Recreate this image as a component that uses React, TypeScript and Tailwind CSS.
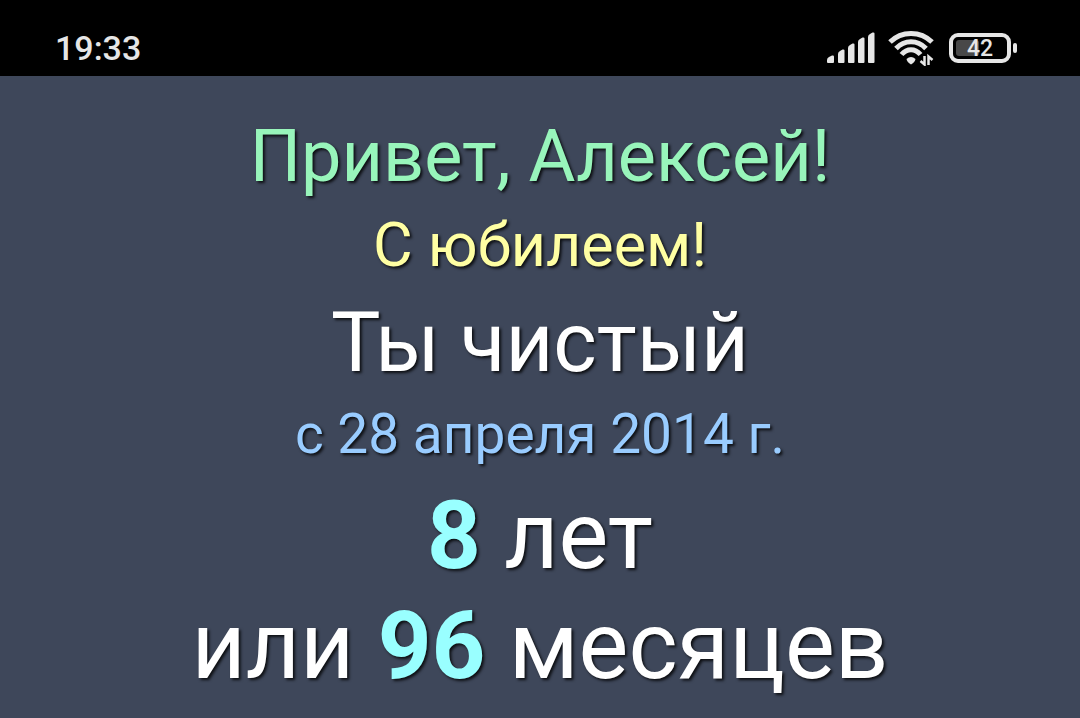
function SignalIcon() {
  return (
    <svg className="h-8 w-12" viewBox="0 0 48 32" fill="#e6e6e6" aria-label="Сигнал">
      <path d="M0 30v-2q0-2 2-3l3-1.500q2-.5 2 1v5.500q0 1-1 1H1q-1 0-1-1z" />
      <path d="M11 30v-8q0-2 2-3l2.500-1.500q2-.5 2 1V30q0 1-1 1H12q-1 0-1-1z" />
      <path d="M21 30V16q0-2 2-3l2.500-1.500q2-.5 2 1V30q0 1-1 1H22q-1 0-1-1z" />
      <path d="M31 30V10q0-2 2-3l2.500-1.500q2-.5 2 1V30q0 1-1 1H32q-1 0-1-1z" />
      <path d="M41 30V5q0-2 2-3l2.500-1.500q2-.5 2 1V30q0 1-1 1H42q-1 0-1-1z" />
    </svg>
  );
}

function WifiIcon() {
  return (
    <svg className="h-9 w-12" viewBox="0 0 48 36" fill="none" stroke="#e6e6e6" strokeWidth="5" aria-label="Wi-Fi">
      <path d="M3 12C14.500 .5 33.500 .5 45 12" />
      <path d="M9 18.500C17.500 9.500 30.500 9.500 39 18.500" />
      <path d="M14.500 24.500C20 18 28 18 33.500 24.500" />
      <path d="M19.500 29Q24 25 28.500 29Q28 32 24 34.500Q20 32 19.500 29z" fill="#e6e6e6" stroke="none" />
      <path d="M37.500 26v8.500L33.500 31M41.500 35v-8.500l4 3.500" strokeWidth="2.500" />
    </svg>
  );
}

function Battery({ level }: { level: number }) {
  return (
    <div className="flex items-center gap-0.5">
      <div className="relative flex h-[30px] w-[62px] items-center justify-center rounded-[9px] border-4 border-[#e6e6e6] p-[3px]">
        <div
          className="absolute inset-y-[3px] left-[3px] rounded-[3px] bg-[#484848]"
          style={{ width: `${level}%` }}
        />
        <span className="relative text-[23px] leading-none font-medium">{level}</span>
      </div>
      <div className="h-2.5 w-1 rounded-full bg-[#e6e6e6]" />
    </div>
  );
}

export default function App() {
  return (
    <div className="flex min-h-screen flex-col bg-[#3e475a] font-['Roboto',sans-serif]">
      <header className="flex h-[76px] items-center justify-between bg-black pt-5 pr-[63px] pl-[55px] text-[#e6e6e6]">
        <time className="text-[34px] font-medium">19:33</time>
        <div className="flex items-center gap-3.5">
          <div className="flex items-center gap-3">
            <SignalIcon />
            <WifiIcon />
          </div>
          <Battery level={42} />
        </div>
      </header>
      <main className="flex flex-1 flex-col items-center pt-[39px] text-center text-white [text-shadow:2px_2px_3px_#000000cc]">
        <h1 className="text-[72px] leading-[84px] text-[#98f5bb]">Привет, Алексей!</h1>
        <p className="text-[61px] leading-[92px] text-[#ffffa3]">С юбилеем!</p>
        <p className="text-[83px] leading-[104px]">Ты чистый</p>
        <p className="text-[55px] leading-[78px] text-[#99ccff]">с 28 апреля 2014 г.</p>
        <div className="pt-2 text-[94px] leading-[110px]">
          <p>
            <strong className="text-[#99ffff]">8</strong> лет
          </p>
          <p>
            или <strong className="text-[#99ffff]">96</strong> месяцев
          </p>
        </div>
      </main>
    </div>
  );
}
